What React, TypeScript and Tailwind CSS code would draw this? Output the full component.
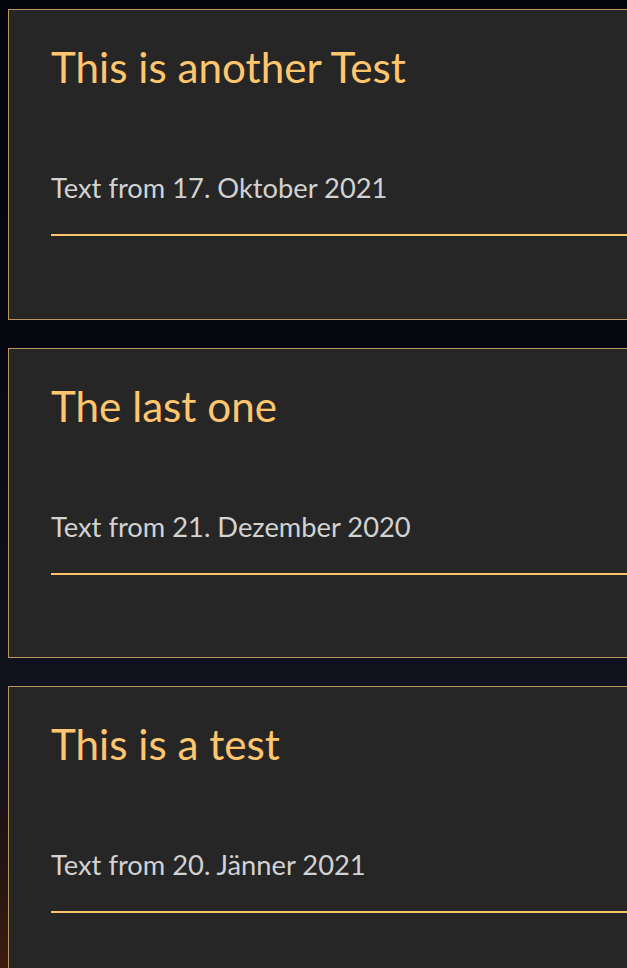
import React from "react";

interface Post {
  id: number;
  title: string;
  date: string;
}

const posts: Post[] = [
  { id: 1, title: "This is another Test", date: "17. Oktober 2021" },
  { id: 2, title: "The last one", date: "21. Dezember 2020" },
  { id: 3, title: "This is a test", date: "20. Jänner 2021" },
];

const PostCard = ({ post }: { post: Post }) => {
  return (
    <div className="w-[680px] shrink-0 border border-[#b8955a] bg-[#262626] pl-[42px] pt-[32px] pb-[82.5px]">
      <h2 className="text-[42.2px] leading-[50px] font-normal text-[#ffc66e]">{post.title}</h2>
      <p className="mt-[80px] text-[27.3px] leading-[32px] text-[#d2d2d2]">Text from {post.date}</p>
      {/* orange rule under the date */}
      <div className="mt-[30px] h-[2px] bg-[#ffc46b]" />
    </div>
  );
};

export default function App() {
  return (
    <div className="h-screen w-full overflow-hidden font-['Lato',sans-serif] bg-[radial-gradient(ellipse_120px_220px_at_0%_100%,#3e1c10_0%,rgba(42,21,16,0.75)_45%,rgba(18,19,29,0)_100%),linear-gradient(to_bottom,#04050c_0%,#07080f_35%,#11121c_70%,#13131c_100%)]">
      <div className="flex flex-col gap-7 pl-2 pt-[9px]">
        {posts.map((post) => (
          <PostCard key={post.id} post={post} />
        ))}
      </div>
    </div>
  );
}
